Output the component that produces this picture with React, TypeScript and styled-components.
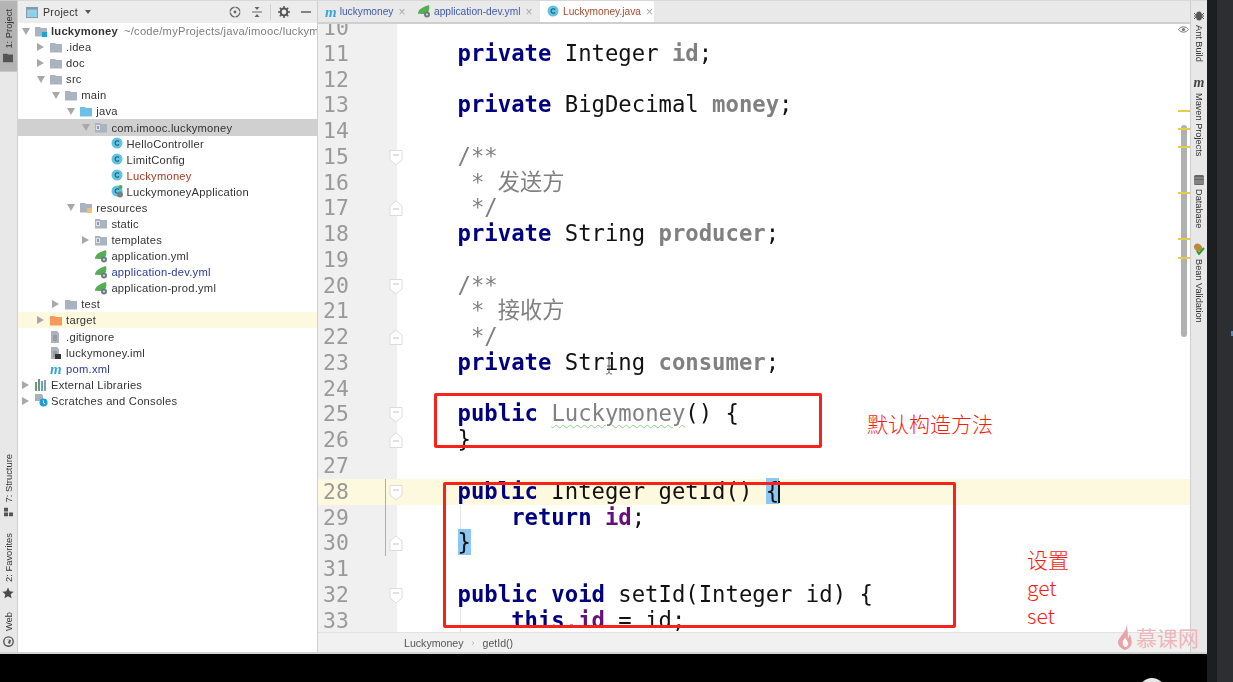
import React from 'react';
import styled, { createGlobalStyle } from 'styled-components';

const Global = createGlobalStyle`
  html, body { margin: 0; padding: 0; background: #000; overflow: hidden; }
  #root { width: 1233px; height: 682px; }
`;

const UI = '"Liberation Sans", Arial, "Noto Sans CJK SC", sans-serif';
const MONO = '"DejaVu Sans Mono", "Noto Sans CJK SC", monospace';

const Page = styled.div`
  position: relative; width: 1233px; height: 682px; overflow: hidden;
  display: grid; grid-template-columns: 1207px 10px 16px; background: #000;
`;
const DarkA = styled.div`background: #1d1e20;`;
const DarkB = styled.div`background: #2c2e32;`;
const LeftColumn = styled.div`display: flex; flex-direction: column; height: 682px;`;
const Ide = styled.div`
  display: flex; background: #fff; border-bottom: 2px solid #d4d4d4;
  border-top: 1px solid #d8d8d8; box-sizing: border-box; height: 654px;
  filter: blur(0.45px); font-family: ${UI};
`;
const Stripe = styled.aside`
  width: 17px; flex: none; background: #e8e8e8; border-right: 1px solid #cfcfcf;
  display: flex; flex-direction: column; align-items: center; position: relative;
`;
const RightStripeBox = styled.aside`
  width: 17px; flex: none; background: #e8e8e8; border-left: 1px solid #cfcfcf;
  display: flex; flex-direction: column; align-items: center; box-sizing: border-box;
  padding-top: 10px;
`;
const StripeTab = styled.div<{ $active?: boolean; $mt?: number }>`
  writing-mode: vertical-rl; transform: rotate(180deg); font-size: 9.4px; color: #333;
  display: flex; align-items: center; gap: 5px; width: 17px; margin-top: ${p => p.$mt ?? 0}px;
  background: ${p => (p.$active ? '#b4b4b4' : 'transparent')};
  white-space: nowrap; box-sizing: border-box;
  padding: ${p => (p.$active ? '9px 0 8px' : '0')};
`;
const RightTab = styled.div<{ $mt: number }>`
  writing-mode: vertical-rl; font-size: 9.2px; color: #333; display: flex; align-items: center;
  gap: 4px; margin-top: ${p => p.$mt}px; white-space: nowrap;
`;
const Panel = styled.section`
  width: 300px; flex: none; display: flex; flex-direction: column; border-right: 1px solid #cfcfcf;
  box-sizing: border-box; overflow: hidden;
`;
const PanelHead = styled.header`
  height: 22px; flex: none; background: #ececec; display: flex; align-items: center;
  padding-left: 8px; font-size: 10.6px; color: #333; box-sizing: border-box; position: relative;
`;
const HeadTitle = styled.span`margin-left: 5px; letter-spacing: .3px;`;
const HeadCaret = styled.span`
  margin-left: 7px; width: 0; height: 0; border-left: 3px solid transparent;
  border-right: 3px solid transparent; border-top: 4px solid #555;
`;
const HeadTools = styled.div`
  margin-left: auto; display: flex; align-items: center; gap: 10px; padding-right: 5px; color: #555;
`;
const HeadSep = styled.span`width: 1px; height: 16px; background: #d0d0d0; margin: 0 -3px;`;
const Tree = styled.ul`list-style: none; margin: 0; padding: 0; display: flex; flex-direction: column;`;
const Row = styled.li<{ $level: number; $bg?: string }>`
  height: 16.08px; display: flex; align-items: center; white-space: nowrap; overflow: hidden;
  padding-left: ${p => 1 + 15.1 * (p.$level - 1)}px; background: ${p => p.$bg ?? 'transparent'};
  font-size: 11.2px; letter-spacing: .23px; color: #333;
`;
const Arrow = styled.span<{ $open?: boolean; $none?: boolean }>`
  width: 16px; flex: none; padding-left: 3px; box-sizing: border-box; display: flex; 
  &::before {
    content: ''; display: ${p => (p.$none ? 'none' : 'block')}; width: 0; height: 0;
    ${p => p.$open
      ? 'border-left: 4px solid transparent; border-right: 4px solid transparent; border-top: 7px solid #a8a8a8;'
      : 'border-top: 4px solid transparent; border-bottom: 4px solid transparent; border-left: 7px solid #a8a8a8;'}
  }
`;
const IconSlot = styled.span`width: 16px; flex: none; display: flex; align-items: center;`;
const RowText = styled.span<{ $color?: string; $bold?: boolean }>`
  color: ${p => p.$color ?? '#333'}; font-weight: ${p => (p.$bold ? 700 : 400)};
`;
const RowHint = styled.span`color: #7d7d7d; margin-left: 6px;`;
const Editor = styled.main`flex: 1; min-width: 0; display: flex; flex-direction: column;`;
const TabBar = styled.nav`
  height: 21px; flex: none; background: #e9e9e9; border-bottom: 2px solid #cfcfcf;
  display: flex; align-items: center; font-size: 10.2px; box-sizing: content-box;
`;
const Tab = styled.div<{ $active?: boolean; $w: number; $color: string }>`
  width: ${p => p.$w}px; height: 21px; display: flex; align-items: center; box-sizing: border-box;
  padding-left: 7px; gap: 3px; background: ${p => (p.$active ? '#fff' : 'transparent')};
  color: ${p => p.$color}; white-space: nowrap;
`;
const TabClose = styled.span`margin-left: 2px; color: #a9a9a9; font-size: 12px;`;
const Mvn = styled.span`
  font-family: "Liberation Serif", serif; font-style: italic; font-weight: 700; color: #3aa6d8; font-size: 15px;
  line-height: 12px;
`;
const Code = styled.div`
  position: relative; flex: 1; min-height: 0; overflow: hidden; background: #fff;
`;
const Lines = styled.div`margin-top: -9px; font-family: ${MONO}; font-size: 22.25px;`;
const Line = styled.div<{ $current?: boolean }>`
  position: relative; height: 25.78px; line-height: 25.78px; display: flex; white-space: pre;
  background: ${p => (p.$current ? '#fdf9df' : 'transparent')}; color: #111;
`;
const Gutter = styled.div<{ $current?: boolean }>`
  width: 79px; flex: none; background: ${p => (p.$current ? '#fdf9df' : '#f0f0f0')};
  color: #999; font-size: 21.4px; padding-left: 5px; box-sizing: border-box;
`;
const Text = styled.div`padding-left: 7px;`;
const Kw = styled.span`font-weight: 700; color: #000080;`;
const Unused = styled.span`font-weight: 700; color: #808080;`;
const Field = styled.span`font-weight: 700; color: #660e7a;`;
const Doc = styled.span`color: #808080;`;
const Wavy = styled.span`color: #808080; text-decoration: underline wavy #8ccf8c 1px; text-underline-offset: 3px;`;
const Match = styled.span`background: #8dc8f5;`;
const Caret = styled.span`display: inline-block; width: 2px; height: 22px; background: #111; vertical-align: -4px; margin-left: -1px;`;
const Fold = styled.svg`position: absolute; left: 71px; top: 5px;`;
const ChangeBar = styled.span`position: absolute; left: 67px; top: 0; bottom: 0; width: 1px; background: #a9aebd;`;
const Guide = styled.span`position: absolute; left: 142px; top: 0; bottom: 0; width: 1px; background: #e6e6e6;`;
const Eye = styled.svg`position: absolute; right: 1px; top: 1px;`;
const Scroll = styled.div`
  position: absolute; right: 3px; top: 101px; width: 6px; height: 212px; border-radius: 3px; background: #b1b1b1;
`;
const Mark = styled.span<{ $top: number }>`
  position: absolute; right: 0; width: 12px; height: 2px; top: ${p => p.$top}px; background: #e8cb4a;
`;
const Crumbs = styled.footer`
  height: 20px; flex: none; background: #f1f1f1; border-top: 1px solid #e2e2e2; box-sizing: border-box;
  display: flex; align-items: center; padding: 1px 0 0 86px; font-size: 10.6px; color: #555; gap: 8px;
`;
const CrumbSep = styled.span`color: #aaa; font-size: 9px;`;
const RedBox = styled.div<{ $x: number; $y: number; $w: number; $h: number }>`
  position: absolute; left: ${p => p.$x}px; top: ${p => p.$y}px; width: ${p => p.$w}px; height: ${p => p.$h}px;
  border: 3px solid #f5231c; border-radius: 2px; box-sizing: border-box;
`;
const Note = styled.div<{ $x: number; $y: number; $size: number }>`
  position: absolute; left: ${p => p.$x}px; top: ${p => p.$y}px; color: #fb1a10; font-size: ${p => p.$size}px; line-height: 28px;
  font-family: "Noto Sans CJK SC", "Open Sans", sans-serif; font-weight: 300; white-space: nowrap;
`;
const Watermark = styled.div`
  position: absolute; left: 1117px; top: 624px; display: flex; align-items: center; gap: 3px;
  color: #eeb6b9; font-size: 21px; line-height: 26px; font-family: "Noto Sans CJK SC", sans-serif; font-weight: 400;
`;
const Knob = styled.div`
  position: absolute; left: 1139px; top: 678px; width: 26px; height: 26px; border-radius: 50%; background: #e8e8e8;
`;
const Dot = styled.div`position: absolute; left: 1231px; top: 331px; width: 2px; height: 5px; background: #4a90c8;`;
const BlackBand = styled.div`flex: 1; background: #000;`;

/* icons */
const FolderIcon = ({ color = '#a9b4bf', mark }: { color?: string; mark?: string }) => (
  <svg width="12" height="11" viewBox="0 0 12 11">
    <path d="M0 1h5l1 1h6v8.5H0z" fill={color} />
    {mark === 'pkg' && <rect x="1" y="3" width="4" height="5" fill="#dfe4e8" />}
    {mark === 'pkg' && <rect x="2" y="4" width="2" height="3" fill="#8f9ba6" />}
    {mark === 'res' && <rect x="7" y="6" width="5" height="5" fill="#edc36b" />}
    {mark === 'mod' && <rect x="7" y="6" width="5" height="5" fill="#19a5dc" />}
  </svg>
);
const ClassIcon = ({ extra }: { extra?: boolean }) => (
  <svg width="13" height="13" viewBox="0 0 13 13">
    <circle cx="6" cy="6" r="5.500" fill="#5fc3e3" />
    <path d="M8 4.600A2.200 2.200 0 1 0 8 7.400" fill="none" stroke="#24566b" strokeWidth="1.100" />
    {extra && <circle cx="9.500" cy="2" r="2" fill="#4dab4d" />}
    {extra && <circle cx="9" cy="9.500" r="3" fill="#74808a" />}
  </svg>
);
const Spring = () => (
  <svg width="13" height="13" viewBox="0 0 13 13">
    <path d="M0 9C0 4 5 2 11 0c1 4 0 8-4 9-2 .5-5-1-7 0z" fill="#55ad54" />
    <circle cx="9" cy="9.500" r="3" fill="#6f7c86" />
    <circle cx="9" cy="9.500" r="1" fill="#dfe3e6" />
  </svg>
);
const FileIcon = ({ dark }: { dark?: boolean }) => (
  <svg width="11" height="12" viewBox="0 0 11 12">
    <path d="M1 0h6l2 2v10H1z" fill="#adb3b9" />
    <path d="M3 5h4M3 7h4M3 9h4" stroke="#7d858c" />
    {dark && <rect x="5" y="7" width="6" height="5" fill="#333" />}
  </svg>
);
const Libs = () => (
  <svg width="13" height="12" viewBox="0 0 13 12">
    <rect x="0" y="3" width="2" height="9" fill="#5aa85a" /><rect x="3" y="0" width="2" height="12" fill="#7b8a96" />
    <rect x="6" y="2" width="2" height="10" fill="#56a9d0" /><rect x="9" y="1" width="2" height="11" fill="#8f9aa4" />
  </svg>
);
const Scratch = () => (
  <svg width="13" height="13" viewBox="0 0 13 13">
    <path d="M0 0h7l1 2v5H0z" fill="#a9b0b7" /><circle cx="8.500" cy="8.500" r="4" fill="#1c9ddb" />
    <path d="M8.500 6.500v2.400l1.600 1" stroke="#fff" fill="none" />
  </svg>
);

type Node = { level: number; label: string; icon: React.ReactNode; open?: boolean; leaf?: boolean; color?: string; bold?: boolean; hint?: string; bg?: string };
const nodes: Node[] = [
  { level: 1, label: 'luckymoney', icon: <FolderIcon mark="mod" />, open: true, bold: true, hint: '~/code/myProjects/java/imooc/luckymoney' },
  { level: 2, label: '.idea', icon: <FolderIcon /> },
  { level: 2, label: 'doc', icon: <FolderIcon /> },
  { level: 2, label: 'src', icon: <FolderIcon />, open: true },
  { level: 3, label: 'main', icon: <FolderIcon />, open: true },
  { level: 4, label: 'java', icon: <FolderIcon color="#6cc0e6" />, open: true },
  { level: 5, label: 'com.imooc.luckymoney', icon: <FolderIcon mark="pkg" />, open: true, bg: '#d0d0d0' },
  { level: 6, label: 'HelloController', icon: <ClassIcon />, leaf: true },
  { level: 6, label: 'LimitConfig', icon: <ClassIcon />, leaf: true },
  { level: 6, label: 'Luckymoney', icon: <ClassIcon />, leaf: true, color: '#a53a20' },
  { level: 6, label: 'LuckymoneyApplication', icon: <ClassIcon extra />, leaf: true },
  { level: 4, label: 'resources', icon: <FolderIcon mark="res" />, open: true },
  { level: 5, label: 'static', icon: <FolderIcon mark="pkg" />, leaf: true },
  { level: 5, label: 'templates', icon: <FolderIcon mark="pkg" /> },
  { level: 5, label: 'application.yml', icon: <Spring />, leaf: true },
  { level: 5, label: 'application-dev.yml', icon: <Spring />, leaf: true, color: '#2a3a9a' },
  { level: 5, label: 'application-prod.yml', icon: <Spring />, leaf: true },
  { level: 3, label: 'test', icon: <FolderIcon /> },
  { level: 2, label: 'target', icon: <FolderIcon color="#f39a5c" />, bg: '#fdf9df' },
  { level: 2, label: '.gitignore', icon: <FileIcon />, leaf: true },
  { level: 2, label: 'luckymoney.iml', icon: <FileIcon dark />, leaf: true },
  { level: 2, label: 'pom.xml', icon: <Mvn>m</Mvn>, leaf: true, color: '#2a3a9a' },
  { level: 1, label: 'External Libraries', icon: <Libs /> },
  { level: 1, label: 'Scratches and Consoles', icon: <Scratch /> },
];

const FoldMark = ({ up }: { up?: boolean }) => (
  <Fold width="14" height="17" viewBox="0 0 14 17">
    <path d={up ? 'M1 15.500V6l6-5 6 5v9.500z' : 'M1 1.500h12V11l-6 5-6-5z'} fill="#fff" stroke="#dcdcdc" />
    <path d={up ? 'M4 9h6' : 'M4 6h6'} stroke="#c4c4c4" />
  </Fold>
);

type L = { n: number; code?: React.ReactNode; fold?: 'up' | 'down'; change?: boolean; guide?: boolean; current?: boolean };
const lines: L[] = [
  { n: 10 },
  { n: 11, code: <><Kw>    private</Kw> Integer <Unused>id</Unused>;</> },
  { n: 12 },
  { n: 13, code: <><Kw>    private</Kw> BigDecimal <Unused>money</Unused>;</> },
  { n: 14 },
  { n: 15, fold: 'down', code: <Doc>    /**</Doc> },
  { n: 16, code: <Doc>     * 发送方</Doc> },
  { n: 17, fold: 'up', code: <Doc>     */</Doc> },
  { n: 18, code: <><Kw>    private</Kw> String <Unused>producer</Unused>;</> },
  { n: 19 },
  { n: 20, fold: 'down', code: <Doc>    /**</Doc> },
  { n: 21, code: <Doc>     * 接收方</Doc> },
  { n: 22, fold: 'up', code: <Doc>     */</Doc> },
  { n: 23, code: <><Kw>    private</Kw> String <Unused>consumer</Unused>;</> },
  { n: 24 },
  { n: 25, fold: 'down', code: <><Kw>    public</Kw> <Wavy>Luckymoney</Wavy>() {'{'}</> },
  { n: 26, fold: 'up', code: <>    {'}'}</> },
  { n: 27 },
  { n: 28, fold: 'down', change: true, current: true, code: <><Kw>    public</Kw> Integer getId() <Match>{'{'}</Match><Caret /></> },
  { n: 29, change: true, guide: true, code: <><Kw>        return</Kw> <Field>id</Field>;</> },
  { n: 30, fold: 'up', change: true, code: <>    <Match>{'}'}</Match></> },
  { n: 31 },
  { n: 32, fold: 'down', code: <><Kw>    public void</Kw> setId(Integer id) {'{'}</> },
  { n: 33, guide: true, code: <><Kw>        this</Kw>.<Field>id</Field> = id;</> },
];

const marks = [86, 104, 122, 168, 214, 233];

export default function App() {
  return (
    <Page>
      <Global />
      <LeftColumn>
        <Ide>
          <Stripe>
            <StripeTab $active>
              <svg width="10" height="9" viewBox="0 0 10 9" style={{ transform: 'rotate(180deg)' }}><path d="M0 0h4l1 1h5v8H0z" fill="#555" /></svg>
              <span>1: Project</span>
            </StripeTab>
            <StripeTab $mt={382}>
              <svg width="9" height="9" viewBox="0 0 9 9" style={{ transform: 'rotate(180deg)' }}><path d="M0 0h4v4H0zM0 5h4v4H0zM5 5h4v4H5z" fill="#555" /></svg>
              <span>7: Structure</span>
            </StripeTab>
            <StripeTab $mt={17}>
              <svg width="12" height="12" viewBox="0 0 24 24" style={{ transform: 'rotate(180deg)' }}><path d="M12 1l3.400 7.400 8 .9-6 5.400 1.700 8L12 18.700 4.900 22.700l1.700-8-6-5.400 8-.9z" fill="#4a4a4a" /></svg>
              <span>2: Favorites</span>
            </StripeTab>
            <StripeTab $mt={13}>
              <svg width="11" height="11" viewBox="0 0 11 11" style={{ transform: 'rotate(180deg)' }}><circle cx="5.500" cy="5.500" r="4.700" fill="none" stroke="#555" strokeWidth="1.400" /><path d="M3 3l3 1-1 3 2 1 1-4z" fill="#555" /></svg>
              <span>Web</span>
            </StripeTab>
          </Stripe>
          <Panel>
            <PanelHead>
              <svg width="12" height="11" viewBox="0 0 12 11"><rect x=".5" y=".5" width="11" height="10" fill="#8fd0ea" stroke="#8a98a5" /><rect x=".5" y=".5" width="11" height="2" fill="#8a98a5" /></svg>
              <HeadTitle>Project</HeadTitle>
              <HeadCaret />
              <HeadTools>
                <svg width="12" height="12" viewBox="0 0 12 12"><circle cx="6" cy="6" r="4.800" fill="none" stroke="#666" strokeWidth="1.400" /><circle cx="6" cy="6" r="1.400" fill="#666" /><path d="M6 0v3M6 9v3M0 6h3M9 6h3" stroke="#ececec" /></svg>
                <svg width="12" height="12" viewBox="0 0 12 12"><path d="M1 6h10" stroke="#666" /><path d="M3.500 1L6 4l2.500-3zM3.500 11L6 8l2.500 3z" fill="#666" /></svg>
                <HeadSep />
                <svg width="12" height="12" viewBox="0 0 12 12"><circle cx="6" cy="6" r="3.400" fill="none" stroke="#555" strokeWidth="2" /><path d="M6 0v2.500M6 9.500V12M0 6h2.500M9.500 6H12M1.800 1.800l1.800 1.800M8.400 8.400l1.800 1.800M1.800 10.200l1.800-1.800M8.400 3.600l1.800-1.800" stroke="#555" strokeWidth="1.500" /></svg>
                <svg width="12" height="12" viewBox="0 0 12 12"><path d="M1 6h10" stroke="#555" strokeWidth="1.400" /></svg>
              </HeadTools>
            </PanelHead>
            <Tree>
              {nodes.map(node => (
                <Row key={node.label} $level={node.level} $bg={node.bg}>
                  <Arrow $open={node.open} $none={node.leaf} />
                  <IconSlot>{node.icon}</IconSlot>
                  <RowText $color={node.color} $bold={node.bold}>{node.label}</RowText>
                  {node.hint && <RowHint>{node.hint}</RowHint>}
                </Row>
              ))}
            </Tree>
          </Panel>
          <Editor>
            <TabBar>
              <Tab $w={93} $color="#3f5aa8"><Mvn>m</Mvn>luckymoney<TabClose>×</TabClose></Tab>
              <Tab $w={129} $color="#3f5aa8"><Spring />application-dev.yml<TabClose>×</TabClose></Tab>
              <Tab $active $w={114} $color="#a9492c"><ClassIcon />Luckymoney.java<TabClose>×</TabClose></Tab>
            </TabBar>
            <Code>
              <Lines>
                {lines.map(line => (
                  <Line key={line.n} $current={line.current}>
                    <Gutter $current={line.current}>{line.n}</Gutter>
                    {line.change && <ChangeBar />}
                    {line.guide && <Guide />}
                    {line.fold && <FoldMark up={line.fold === 'up'} />}
                    <Text>{line.code ?? ' '}</Text>
                  </Line>
                ))}
              </Lines>
              <Eye width="11" height="9" viewBox="0 0 11 9">
                <path d="M0.500 4.500C3 1 8 1 10.500 4.500 8 8 3 8 0.500 4.500z" fill="none" stroke="#777" />
                <circle cx="5.500" cy="4.500" r="1.600" fill="#777" />
              </Eye>
              <Scroll />
              {marks.map(top => <Mark key={top} $top={top} />)}
            </Code>
            <Crumbs>
              <span>Luckymoney</span>
              <CrumbSep>›</CrumbSep>
              <span>getId()</span>
            </Crumbs>
          </Editor>
          <RightStripeBox>
            <RightTab $mt={0}>
              <svg width="10" height="10" viewBox="0 0 10 10"><ellipse cx="5" cy="5" rx="3" ry="4.500" fill="#555" /><path d="M0 2l2 2M10 2L8 4M0 8l2-2M10 8L8 6M0 5h10" stroke="#555" /></svg>
              <span>Ant Build</span>
            </RightTab>
            <RightTab $mt={15}>
              <Mvn style={{ color: '#444', writingMode: 'horizontal-tb', fontSize: 14 }}>m</Mvn>
              <span>Maven Projects</span>
            </RightTab>
            <RightTab $mt={19}>
              <svg width="10" height="10" viewBox="0 0 10 10"><rect width="10" height="10" rx="1.500" fill="#666" /><path d="M0 3h10M0 6h10M0 8h10" stroke="#ccc" strokeWidth=".6" /></svg>
              <span>Database</span>
            </RightTab>
            <RightTab $mt={15}>
              <svg width="12" height="12" viewBox="0 0 12 12"><ellipse cx="5" cy="4.500" rx="4.200" ry="3.500" fill="#b98a3c" transform="rotate(40 5 4.500)" /><path d="M4 8l2 3 5-6" fill="none" stroke="#2fa02f" strokeWidth="2" /></svg>
              <span>Bean Validation</span>
            </RightTab>
          </RightStripeBox>
        </Ide>
        <BlackBand />
      </LeftColumn>
      <DarkA />
      <DarkB />

      <RedBox $x={434} $y={393} $w={388} $h={55} />
      <RedBox $x={443} $y={482} $w={513} $h={146} />
      <Note $x={867} $y={409} $size={21}>默认构造方法</Note>
      <Note $x={1027} $y={545} $size={21}>设置</Note>
      <Note $x={1027} $y={573} $size={21}>get</Note>
      <Note $x={1027} $y={601} $size={21}>set</Note>
      <svg width="12" height="18" viewBox="0 0 12 18" style={{ position: 'absolute', left: 603, top: 357 }}>
        <path d="M3 1c2 0 3 1 3 2v12c0 1 1 2 3 2M9 1C7 1 6 2 6 3M6 15c0 1-1 2-3 2M4 9h4" fill="none" stroke="#555" />
      </svg>
      <Watermark>
        <svg width="16" height="26" viewBox="0 0 16 27"><path d="M9 0c1 5-1 7-4 11-3 4-5 7-4 10 1 3 4 5 7 6 4-1 7-4 7-8 0-3-1-6-2-8-1 2-1 3-2 4 0-5 0-10-2-15z" fill="#e9a4a8" /><path d="M8 14c-2 3-3 5-2 7 .5 2 2 3 3 3 2-1 3-3 2-5z" fill="#fff" /></svg>
        <span>慕课网</span>
      </Watermark>
      <Knob />
      <Dot />
    </Page>
  );
}
